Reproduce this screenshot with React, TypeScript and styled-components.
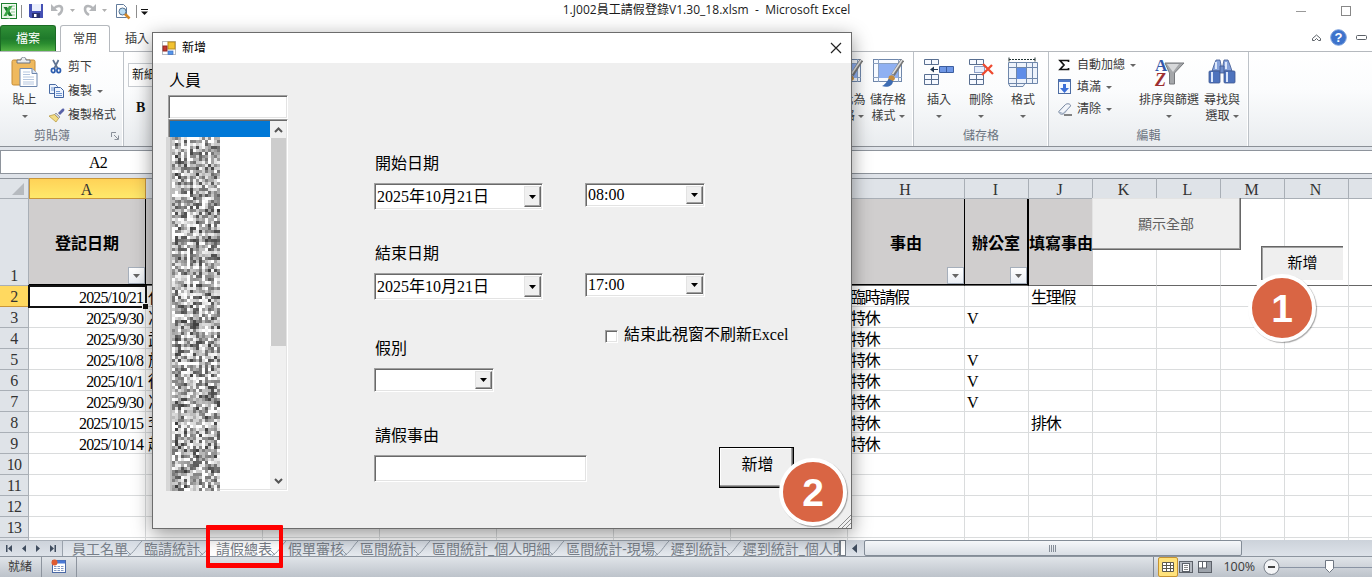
import React from "react";
import styled, { createGlobalStyle, css } from "styled-components";

const ui = `"Open Sans", "Noto Sans CJK TC", sans-serif`;
const ming = `"Liberation Serif", "Noto Sans CJK TC", serif`;

const GlobalStyle = createGlobalStyle`
  * { box-sizing: border-box; }
  body { margin: 0; overflow: hidden; background: #fff; }
`;

const Window = styled.div`
  position: relative;
  width: 1372px;
  height: 577px;
  overflow: hidden;
  display: flex;
  flex-direction: column;
  background: #fff;
  font: 12px/16px ${ui};
  color: #3b3b3b;
  white-space: nowrap;
`;

/* ---------- title bar and ribbon tabs ---------- */

const TitleBar = styled.header`
  display: grid;
  grid-template-columns: 560px 293px 1fr;
  height: 25px;
  flex: none;
`;
const QuickAccess = styled.div`
  display: flex;
  align-items: flex-start;
`;
const Caption = styled.div`
  text-align: center;
  line-height: 19px;
  color: #1a1a1a;
  white-space: pre;
  letter-spacing: 0.04px;
`;
const WindowButtons = styled.div`
  display: flex;
  justify-content: flex-end;
  gap: 35px;
  padding: 6px 21px 0 0;
`;
const TabStrip = styled.nav`
  display: flex;
  align-items: stretch;
  height: 27px;
  flex: none;
  border-bottom: 1px solid #b5b9be;
`;
const FileTab = styled.div`
  width: 56px;
  height: 26px;
  border: 1px solid #1c6b25;
  border-bottom: 0;
  border-radius: 3px 3px 0 0;
  background: linear-gradient(#2f8f36, #1f7a2b 50%, #2a8c2f 70%, #53b245);
  color: #fff;
  text-align: center;
  line-height: 25px;
`;
const ActiveTab = styled.div`
  width: 50px;
  height: 27px;
  margin: 0 15px 0 4px;
  border: 1px solid #b5b9be;
  border-bottom: 0;
  border-radius: 3px 3px 0 0;
  background: #fff;
  text-align: center;
  line-height: 25px;
  z-index: 1;
`;
const Tab = styled.div`
  line-height: 28px;
  margin-right: 31px;
`;
const TabTools = styled.div`
  margin-left: auto;
  display: flex;
  align-items: center;
  gap: 9px;
  padding: 0 5px 1px 0;
`;

/* ---------- ribbon ---------- */

const Ribbon = styled.section`
  display: flex;
  height: 95px;
  flex: none;
  background: linear-gradient(#fff, #fbfcfd 40%, #e9ecef);
  border-bottom: 1px solid #8b9097;
`;
const Group = styled.div<{ $w: number }>`
  width: ${(p) => p.$w}px;
  flex: none;
  display: flex;
  flex-direction: column;
  border-right: 1px solid #bdc2c8;
  box-shadow: inset -1px 0 #fff;
`;
const GroupBody = styled.div<{ $left?: number }>`
  display: flex;
  height: 76px;
  padding-left: ${(p) => p.$left ?? 0}px;
`;
const GroupLabel = styled.div<{ $right?: number }>`
  position: relative;
  text-align: center;
  color: #6b7380;
  line-height: 16px;
  padding-right: ${(p) => p.$right ?? 0}px;
`;
const Launcher = styled.svg`
  position: absolute;
  right: 4px;
  top: 4px;
`;
const BigButton = styled.div<{ $w: number }>`
  width: ${(p) => p.$w}px;
  flex: none;
  display: flex;
  flex-direction: column;
  align-items: center;
  text-align: center;
  padding-top: 5px;
  line-height: 16px;
`;
const IconBox = styled.div`
  height: 35px;
  display: flex;
`;
const LabelLine = styled.div`
  display: flex;
  align-items: center;
  height: 16px;
  gap: 3px;
`;
const Commands = styled.div<{ $row: number; $top: number; $left?: number }>`
  display: grid;
  grid-auto-rows: ${(p) => p.$row}px;
  padding: ${(p) => p.$top}px 0 0 ${(p) => p.$left ?? 0}px;
`;
const Command = styled.div<{ $gap: number }>`
  display: grid;
  grid-template-columns: ${(p) => p.$gap}px auto auto;
  justify-content: start;
  align-items: center;
`;
const Drop = styled.i`
  display: inline-block;
  border: 3px solid transparent;
  border-top-color: #666;
  border-bottom: 0;
  width: 6px;
  height: 3px;
`;
const CmdDrop = styled(Drop)`
  margin-left: 5px;
`;
const FontBox = styled.div`
  width: 200px;
  height: 24px;
  margin: 11px 0 0 4px;
  padding-left: 3px;
  border: 1px solid #c8ccd1;
  background: #fff;
  color: #111;
  line-height: 21px;
`;
const Bold = styled.div`
  font: bold 14px/18px "Liberation Serif", serif;
  color: #111;
  padding: 12px 0 0 12px;
`;

/* ---------- formula bar and sheet ---------- */

const FormulaBar = styled.div`
  flex: none;
  height: 31px;
  padding: 3px 0 4px;
  background: #dfe3e9;
`;
const FormulaInner = styled.div`
  height: 24px;
  border: 1px solid #8e949c;
  border-right: 0;
  background: #fff;
  padding-left: 88px;
  font: 16px/24px ${ming};
  color: #000;
  letter-spacing: -0.7px;
`;
const Sheet = styled.main`
  flex: none;
  height: 362px;
  overflow: hidden;
  display: grid;
  grid-template-columns: 29px repeat(8, 117px) repeat(6, 64px) 24px;
  grid-template-rows: 21px 87px;
  grid-auto-rows: 21px;
  font: 16px/21px ${ming};
  color: #000;
`;
const headBorder = css`
  border-right: 1px solid #a9afb6;
  border-bottom: 1px solid #a9afb6;
`;
const ColHead = styled.div<{ $on?: boolean }>`
  ${headBorder}
  border-top: 1px solid #8e949c;
  background: #dfe3e8;
  color: #333;
  text-align: center;
  line-height: 22px;
  padding-right: 2px;
  ${(p) =>
    p.$on &&
    css`
      background: linear-gradient(#ffd257, #ffe96b);
      border-color: #c9963a;
      border-left: 1px solid #c9963a;
    `}
`;
const Corner = styled(ColHead)`
  display: flex;
  justify-content: flex-end;
  align-items: flex-end;
  padding: 0 4px 3px 0;
`;
const RowHead = styled.div<{ $on?: boolean }>`
  ${headBorder}
  background: ${(p) => (p.$on ? "#ffd960" : "#dfe3e8")};
  ${(p) => p.$on && "border-color: #c9963a;"}
  display: flex;
  align-items: flex-end;
  justify-content: center;
  color: #333;
  line-height: 18px;
  letter-spacing: -0.7px;
`;
const Cell = styled.div<{ $right?: boolean }>`
  border-right: 1px solid #dadcdd;
  border-bottom: 1px solid #dadcdd;
  padding: 0 2px;
  overflow: hidden;
  line-height: 24px;
  letter-spacing: ${(p) => (p.$right ? "-0.9px" : "-1.3px")};
  text-align: ${(p) => (p.$right ? "right" : "left")};
`;
const ActiveCell = styled(Cell)`
  position: relative;
  overflow: visible;
  outline: 2px solid #111;
  outline-offset: -1px;
  border-color: #fff;
  z-index: 1;
  &::after {
    content: "";
    position: absolute;
    right: -3px;
    bottom: -3px;
    width: 5px;
    height: 5px;
    background: #111;
    border-left: 1px solid #fff;
    border-top: 1px solid #fff;
  }
`;
const HeadCell = styled.div<{ $edge?: number; $plain?: boolean }>`
  position: relative;
  background: ${(p) => (p.$plain ? "#fff" : "#d0cece")};
  border-right: ${(p) => (p.$plain ? "1px solid #dadcdd" : `${p.$edge ?? 1}px solid ${p.$edge === 0 ? "#d0cece" : "#000"}`)};
  border-bottom: 1px solid #666;
  box-shadow: ${(p) => (p.$plain || p.$edge === 0 ? "none" : "inset 0 -1px #000")};
  display: flex;
  align-items: center;
  justify-content: center;
  font-weight: 700;
  padding-top: 2px;
`;
const Filter = styled.span`
  position: absolute;
  right: 0;
  bottom: 1px;
  width: 17px;
  height: 17px;
  border: 1px solid #a6afbb;
  background: linear-gradient(#fff, #eaeef4);
  display: flex;
  align-items: center;
  justify-content: center;
`;
const SheetButton = styled.div<{ $x: number; $y: number; $w: number; $h: number; $sunk?: boolean }>`
  position: absolute;
  left: ${(p) => p.$x}px;
  top: ${(p) => p.$y}px;
  width: ${(p) => p.$w}px;
  height: ${(p) => p.$h}px;
  display: flex;
  align-items: center;
  justify-content: center;
  background: #efefef;
  ${(p) =>
    p.$sunk
      ? css`
          border-left: 1px solid #666;
          border-top: 1px solid #666;
          box-shadow: inset 1px 1px #a0a0a0;
          color: #000;
          font-size: 15px;
          padding-bottom: 3px;
        `
      : css`
          border-right: 1px solid #666;
          border-bottom: 1px solid #666;
          box-shadow: inset -1px -1px #a0a0a0, inset 1px 1px #e3e3e3;
          color: #606060;
          font-size: 14px;
        `}
`;

/* ---------- sheet tabs and status bar ---------- */

const BottomBar = styled.div`
  flex: none;
  height: 17px;
  display: flex;
  background: linear-gradient(#ccd2da, #dde2e9);
  border-bottom: 1px solid #8d959f;
`;
const Nav = styled.div`
  width: 63px;
  border-right: 1px solid #9aa2ac;
  border-top: 1px solid #a9b0b9;
`;
const Tabs = styled.div`
  width: 776px;
  display: flex;
  overflow: hidden;
  border-top: 1px solid #9aa2ac;
  padding-left: 1px;
  background: linear-gradient(#d4dae2, #e6eaef);
`;
const SheetTab = styled.div<{ $on?: boolean }>`
  display: flex;
  flex: none;
  padding-left: 8px;
  font: 14px/15px ${ui};
  color: #777e88;
  background: ${(p) => (p.$on ? "#fff" : "transparent")};
  & > svg { margin-left: -1px; }
`;
const TabSplit = styled.div`
  width: 7px;
  height: 16px;
  border: 1px solid #777f89;
  border-left-width: 2px;
  background: #fff;
`;
const ScrollTrack = styled.div`
  flex: 1;
  display: flex;
  align-items: center;
  padding-left: 6px;
  gap: 7px;
`;
const ScrollThumb = styled.div`
  width: 378px;
  height: 16px;
  border: 1px solid #838c97;
  border-radius: 2px;
  background: linear-gradient(#f5f7fa, #d9dee5);
  display: flex;
  align-items: center;
  justify-content: center;
`;
const StatusBar = styled.footer`
  flex: 1;
  display: flex;
  align-items: center;
  background: linear-gradient(#e0e4e9, #bdc3cb);
`;
const Ready = styled.div`
  width: 42px;
  height: 20px;
  line-height: 20px;
  padding-left: 8px;
  border-right: 1px solid #8d949e;
`;
const Macro = styled.div`
  width: 35px;
  height: 20px;
  padding: 2px 0 0 9px;
  border-right: 1px solid #8d949e;
`;
const StatusTools = styled.div`
  margin-left: auto;
  width: 219px;
  height: 20px;
  display: flex;
  align-items: center;
  border-left: 1px solid #7f8792;
  padding-left: 4px;
`;
const ViewOn = styled.div`
  width: 20px;
  height: 20px;
  border: 1px solid #c69331;
  border-radius: 2px;
  background: #ffe27b;
  padding: 3px 0 0 2px;
  margin-right: 1px;
`;
const Percent = styled.div`
  flex: none;
  width: 51px;
  padding-left: 11px;
  font-size: 12.5px;
`;

/* ---------- dialog ---------- */

const Dialog = styled.section`
  position: absolute;
  left: 152px;
  top: 32px;
  width: 700px;
  height: 497px;
  border: 1px solid #6c6c6c;
  background: #efefef;
  box-shadow: 0 5px 18px rgba(0, 0, 0, 0.42);
  display: flex;
  flex-direction: column;
  font: 16px/20px ${ming};
  color: #000;
  z-index: 3;
`;
const DialogTitle = styled.div`
  height: 30px;
  flex: none;
  background: #fff;
  display: flex;
  align-items: center;
  gap: 6px;
  padding: 0 9px;
  font: 12px/28px ${ui};
  & > svg:last-child { margin-left: auto; }
`;
const DialogBody = styled.div`
  flex: 1;
  display: flex;
  padding: 7px 0 0 15px;
`;
const People = styled.div`
  width: 120px;
  margin-right: 86px;
`;
const Label = styled.div<{ $top?: number }>`
  margin-top: ${(p) => p.$top ?? 0}px;
  height: 20px;
  line-height: 22px;
  padding-left: 1px;
`;
const Sunken = styled.div<{ $w: number; $h: number }>`
  width: ${(p) => p.$w}px;
  height: ${(p) => p.$h}px;
  background: #fff;
  border: 1px solid;
  border-color: #a0a0a0 #fff #fff #a0a0a0;
  box-shadow: inset 1px 1px #696969, inset -1px -1px #e3e3e3;
  padding: 2px 1px 2px 2px;
  display: flex;
`;
const NameInput = styled(Sunken)<{ $top?: number }>`
  margin-top: ${(p) => p.$top ?? 5}px;
`;
const NameList = styled(Sunken)`
  position: relative;
  padding: 1px;
`;
const Selected = styled.div`
  flex: 1;
  height: 16px;
  background: #0078d7;
`;
const ListScroll = styled.div`
  width: 16px;
  display: flex;
  flex-direction: column;
  align-items: center;
  background: #f0f0f0;
`;
const ListThumb = styled.div`
  width: 16px;
  border-left: 1px solid #fff;
  height: 208px;
  background: #cdcdcd;
  margin-bottom: auto;
`;
const Redacted = styled.svg`
  position: absolute;
  left: -3px;
  top: 17px;
`;
const Fields = styled.div`
  width: 420px;
`;
const Pair = styled.div<{ $top: number }>`
  display: flex;
  gap: 42px;
  margin-top: ${(p) => p.$top}px;
  height: 27px;
`;
const Value = styled.span<{ $h: number }>`
  flex: 1;
  line-height: ${(p) => p.$h}px;
`;
const Arrow = styled.span`
  width: 17px;
  align-self: stretch;
  background: #f0f0f0;
  border: 1px solid;
  border-color: #e3e3e3 #696969 #696969 #e3e3e3;
  box-shadow: inset -1px -1px #a0a0a0;
  display: flex;
  align-items: center;
  justify-content: center;
`;
const CheckRow = styled.div`
  display: flex;
  align-items: center;
  height: 20px;
  gap: 6px;
  margin: 25px 0 0 231px;
`;
const CheckBox = styled(Sunken)`
  margin-top: 3px;
`;
const LastRow = styled.div`
  display: flex;
  align-items: flex-start;
  margin-top: 2px;
`;
const Reason = styled.div`
  width: 345px;
`;
const Submit = styled.button`
  width: 75px;
  height: 41px;
  padding: 0 0 5px 2px;
  border: 1px solid #000;
  background: #efefef;
  box-shadow: inset -1px -1px #696969, inset -2px -2px #a0a0a0, inset 1px 1px #fff;
  font: inherit;
  color: inherit;
`;
const Grip = styled.svg`
  position: absolute;
  right: 0;
  bottom: 0;
`;
const Step = styled.div<{ $x: number; $y: number }>`
  position: absolute;
  left: ${(p) => p.$x - 34}px;
  top: ${(p) => p.$y - 34}px;
  width: 68px;
  height: 68px;
  border: 4px solid #fff;
  border-radius: 50%;
  background: #d96544;
  box-shadow: 1px 1px 1px rgba(0, 0, 0, 0.35);
  color: #fff;
  font: bold 39px/62px "Liberation Sans", sans-serif;
  text-align: center;
  z-index: 5;
`;
const Highlight = styled.div`
  position: absolute;
  left: 206px;
  top: 525px;
  width: 77px;
  height: 43px;
  border: 4px solid #f00;
  border-width: 5px 4px;
  border-radius: 1px;
  z-index: 4;
`;

/* ---------- drawings ---------- */

const ExcelLogo = () => (
  <svg width="17" height="17" viewBox="0 0 17 17">
    <rect x="1.500" y=".5" width="15" height="15" fill="#f4faf3" stroke="#1d7f2e" />
    <path d="M11 3h4M11 6h4M11 9h4M11 12h4" stroke="#8fc795" />
    <path d="M2 2.500l8-1v14l-8-1z" fill="#e3f3e1" />
    <path d="M3.500 4h3.500l5.500 9H9z" fill="#1b7a2c" />
    <path d="M12.500 3H9L3.500 13h3z" fill="#3aa544" />
  </svg>
);
const Save = () => (
  <svg width="14" height="14">
    <path d="M0 0h14v14H1.500L0 12.500z" fill="#4450b4" />
    <rect x="3" y="0" width="9" height="7" fill="#e9eefb" />
    <rect x="3" y="9" width="8" height="5" fill="#27306f" />
    <rect x="5" y="10" width="2.500" height="3" fill="#fff" />
  </svg>
);
const Undo = ({ flip }: { flip?: boolean }) => (
  <svg width="13" height="14" viewBox="0 0 13 14">
    <g transform={flip ? "translate(13 0) scale(-1 1)" : undefined}>
      <path d="M3 5.500C6 2 11 2 11 6c0 3-1.500 4.500-4 6" fill="none" stroke="#b4b6b9" strokeWidth="2.600" />
      <path d="M0 1v7h7z" fill="#b4b6b9" />
    </g>
  </svg>
);
const Preview = () => (
  <svg width="16" height="16">
    <path d="M1.500.5h7l3 3v10h-10z" fill="#fff" stroke="#637c9c" />
    <circle cx="7.500" cy="7.500" r="3.500" fill="#b9dcf3" stroke="#56718f" />
    <path d="M10 10l4.500 4.500" stroke="#d48726" strokeWidth="2.600" />
  </svg>
);
const Paste = () => (
  <svg width="28" height="32">
    <rect x="1" y="3" width="23" height="25" rx="1.500" fill="#efb95e" stroke="#c68c35" />
    <path d="M6 6V3h4c0-4 5-4 5 0h4v3z" fill="#e9ebee" stroke="#6c7480" />
    <path d="M9 11.500h12l5 5v13H9z" fill="#fff" stroke="#6d86ad" />
    <path d="M21 11.500v5h5" fill="#dce6f5" stroke="#6d86ad" />
    <path d="M12 15h7M12 17.500h7M12 20h11M12 22.500h11M12 25h11M12 27h11" stroke="#b5c6df" />
  </svg>
);
const Scissors = () => (
  <svg width="14" height="16" fill="none">
    <path d="M4 1l5 9M9.500 1L5 10" stroke="#5e7392" strokeWidth="1.700" />
    <ellipse cx="4.200" cy="11.500" rx="1.800" ry="2.200" stroke="#2b5cae" strokeWidth="1.700" />
    <ellipse cx="9.700" cy="11.500" rx="1.800" ry="2.200" stroke="#2b5cae" strokeWidth="1.700" />
  </svg>
);
const Copy = () => (
  <svg width="16" height="14">
    <path d="M.5.5h6l2 2v7h-8z" fill="#eef4fd" stroke="#4a6ca5" />
    <path d="M2 4h4M2 6h5" stroke="#6d93cf" />
    <path d="M5.500 3.500h6l3 3v7h-9z" fill="#eef4fd" stroke="#3f62a0" />
    <path d="M7 7.500h4M7 9.500h6M7 11.500h6" stroke="#6d93cf" />
  </svg>
);
const Brush = () => (
  <svg width="16" height="15">
    <path d="M9 5l4-4c2-1 3 0 2 2l-4 4z" fill="#5963a8" />
    <path d="M7 5l4 4-1.500 1.500-4-4z" fill="#c9cdd5" stroke="#777" strokeWidth=".6" />
    <path d="M5.500 6.500l4 4L7 14 0 8z" fill="#f2dc86" stroke="#b39437" strokeWidth=".7" />
  </svg>
);
const CellStyle = () => (
  <svg width="31" height="31">
    <rect x=".5" y="2.500" width="28" height="22" fill="#f7faff" stroke="#6f87ab" />
    <path d="M5.500 2v23M25.500 2v23M0 6.500h29M0 20.500h29" stroke="#8aa0c0" />
    <rect x="6" y="7" width="19" height="14" fill="#8fb0f2" />
    <path d="M29.500 3L20 18" stroke="#777" strokeWidth="4" />
    <path d="M29 3L19.500 17" stroke="#ddd" strokeWidth="1.500" />
    <path d="M16 19c3-2 6 0 6 3l-3 3-4-2z" fill="#c58d3f" />
    <path d="M16 22c-2 2-4 6-7 7 5 2 11 0 11-5z" fill="#3d6cb3" />
  </svg>
);
const InsertCells = () => (
  <svg width="30" height="29" stroke="#596f91">
    <g fill="#f6f9ff">
      <path d="M.5 2.500h14v5H.5zM7.500 2.500v5M.5 17.500h14v10H.5zM7.500 17.500v10M.5 22.500h14" />
      <path d="M15.500 9.500h14v6h-14zM22.500 9.500v6" fill="#6f97e6" stroke="#3c5e9f" />
    </g>
    <path d="M14 12.500H8" stroke="#243954" />
    <path d="M6 12.500l4-3v6z" fill="#243954" stroke="none" />
  </svg>
);
const DeleteCells = () => (
  <svg width="25" height="29" stroke="#596f91">
    <path d="M.5 2.500h14v5H.5zM7.500 2.500v5M.5 17.500h14v10H.5zM7.500 17.500v10M.5 22.500h14" fill="#f6f9ff" />
    <path d="M5.500 9.500h10v6h-10z" fill="#e6eefc" stroke="#24468f" strokeDasharray="1 1" />
    <path d="M14 7l10 10M23 8L13 18" stroke="#ee4a30" strokeWidth="2.300" />
  </svg>
);
const FormatCells = () => (
  <svg width="30" height="31" stroke="#6f87ab">
    <path d="M1 2.500h26" stroke="#233" strokeDasharray="2 1" />
    <path d="M1 .5v4M27 .5v4" stroke="#233" />
    <path d="M.5 5.500h29v21H17l-2 3H2l-1.500-3z" fill="#eef3fb" />
    <path d="M8.500 5v24M18.500 5v21M24.500 5v21M0 10.500h29M0 21.500h29M0 26.500h29" />
    <rect x="9" y="11" width="9" height="11" fill="#5f8de8" stroke="none" />
  </svg>
);
const FillIcon = () => (
  <svg width="13" height="16">
    <rect x=".5" y=".5" width="12" height="14" fill="#f4f8ff" stroke="#4d6ca2" />
    <path d="M1 2h11" stroke="#4d78c9" strokeWidth="2" />
    <path d="M5 5h3v4h3l-4.500 5L2 9h3z" fill="#3b6fd8" />
  </svg>
);
const Eraser = () => (
  <svg width="14" height="13">
    <path d="M.8 8.500L7.500 1.500c2-1.500 5.500-.5 5 1.500L6 10.500c-2 1.500-5 .5-5.200-2z" fill="#f2f5fa" stroke="#74849e" />
    <path d="M1 9l4 1.500L12 4" fill="none" stroke="#9cabc2" />
    <path d="M6 12h8" stroke="#111" />
  </svg>
);
const SortIcon = () => (
  <svg width="31" height="32">
    <path d="M11 6h19l-9.500 10v11h-5V16z" fill="#a5a7aa" stroke="#77797d" />
    <path d="M13 7h12l-6 8z" fill="#d7d8da" />
    <text x="1" y="14" fontFamily="Liberation Serif" fontWeight="700" fontSize="17" fill="#3457a8">A</text>
    <text x="1" y="29" fontFamily="Liberation Serif" fontWeight="700" fontStyle="italic" fontSize="18" fill="#9c2f31">Z</text>
  </svg>
);
const Binoculars = () => (
  <svg width="28" height="28">
    <g stroke="#3d5790" strokeWidth=".8">
      <path d="M8 3h4l1 5v6H4l2-6zM16 3h4l2 5 2 6h-9V8z" fill="#86a2da" />
      <rect x="1" y="14" width="11" height="12" rx="1" fill="#4e73bd" />
      <rect x="16" y="14" width="11" height="12" rx="1" fill="#4e73bd" />
      <path d="M12 9h4v7h-4z" fill="#6d8bc9" />
    </g>
    <path d="M4 15v10M19 15v10M8 5v7M18 5v7" stroke="#dce7fb" strokeWidth="2" />
  </svg>
);
const FormIcon = () => (
  <svg width="14" height="14">
    <rect x=".5" y=".5" width="13" height="13" fill="#fff" stroke="#b8bcc2" />
    <rect x="6" y="1" width="7" height="7" fill="#f2c230" stroke="#b98a1b" />
    <rect x="1" y="5" width="4" height="5" fill="#c5362e" stroke="#8f2822" />
    <rect x="6" y="10" width="5" height="3.500" fill="#5595ea" stroke="#3f70bf" strokeWidth=".7" />
  </svg>
);
const Tri = ({ w = 7, c = "#000" }: { w?: number; c?: string }) => (
  <svg width={w} height="4" viewBox="0 0 7 4">
    <path d="M0 0h7L3.500 4z" fill={c} />
  </svg>
);
const Chevron = ({ down }: { down?: boolean }) => (
  <svg width="9" height="17" viewBox="0 0 9 17">
    <path d={down ? "M1 7l3.500 3.500L8 7" : "M1 11l3.500-3.500L8 11"} fill="none" stroke="#555" strokeWidth="2" />
  </svg>
);

/* Pixelated names: three glyph-wide blocks per 16px line */
const CELL = 3;
const mosaic = (() => {
  const out: { x: number; y: number; f: string }[] = [];
  let seed = 20251;
  const rnd = () => {
    seed = (seed * 1103515245 + 12345) % 2147483648;
    return seed / 2147483648;
  };
  for (let r = 0; r < 118; r++) {
    const lineGap = (r * CELL) % 16 < 2;
    for (let c = 0; c < 16; c++) {
      const gap = c === 0 || c === 5 || c === 10;
      let g = Math.round(60 + rnd() * 205);
      if (gap || lineGap) g += 50;
      g = Math.min(255, g);
      out.push({ x: 6 + c * CELL, y: r * CELL, f: `rgb(${g},${g},${g})` });
    }
  }
  return out;
})();

const letters = "ABCDEFGHIJKLMN".split("").concat("");
const rows = [
  ["2025/10/21", "代", "臨時請假", "", "生理假"],
  ["2025/9/30", "冷", "特休", "V", ""],
  ["2025/9/30", "武", "特休", "", ""],
  ["2025/10/8", "施", "特休", "V", ""],
  ["2025/10/1", "徐", "特休", "V", ""],
  ["2025/9/30", "冷", "特休", "V", ""],
  ["2025/10/15", "李", "特休", "", "排休"],
  ["2025/10/14", "趙", "特休", "", ""],
  [], [], [], [],
];
const headText: Record<string, string> = { A: "登記日期", H: "事由", I: "辦公室", J: "填寫事由" };
const sheetTabs = ["員工名單", "臨請統計", "請假總表", "假單審核", "區間統計", "區間統計_個人明細", "區間統計-現場", "遲到統計", "遲到統計_個人明細"];

const FilterArrow = () => (
  <Filter>
    <Tri c="#666" />
  </Filter>
);

const Combo = ({ w, h, text = "" }: { w: number; h: number; text?: string }) => (
  <Sunken $w={w} $h={h}>
    <Value $h={h - 6}>{text}</Value>
    <Arrow>
      <Tri />
    </Arrow>
  </Sunken>
);

const cellFor = (row: string[], col: string) => {
  const at = ["A", "B", "H", "I", "J"].indexOf(col);
  return at < 0 ? "" : row[at] ?? "";
};

export default function App() {
  return (
    <Window>
      <GlobalStyle />
      <TitleBar>
        <QuickAccess>
          <svg width="150" height="25">
            <g transform="translate(0 3)"><ExcelLogo /></g>
            <path d="M21.500 5v13M136.500 5v13" stroke="#8d8d8d" />
            <g transform="translate(29 4)"><Save /></g>
            <g transform="translate(51 3)"><Undo /></g>
            <path d="M70 9h5l-2.500 3zM102 9h5l-2.500 3z" fill="#b0b0b0" />
            <g transform="translate(83 3)"><Undo flip /></g>
            <g transform="translate(115 4)"><Preview /></g>
            <path d="M141 9.500h7" stroke="#111" />
            <path d="M141 11.500h7l-3.500 3.500z" fill="#111" />
          </svg>
        </QuickAccess>
        <Caption>{"1.J002員工請假登錄V1.30_18.xlsm  -  Microsoft Excel"}</Caption>
        <WindowButtons>
          <svg width="10" height="10"><path d="M0 5.500h10" stroke="#999" /></svg>
          <svg width="10" height="10"><rect x=".5" y=".5" width="9" height="9" fill="none" stroke="#888" /></svg>
        </WindowButtons>
      </TitleBar>
      <TabStrip>
        <FileTab>檔案</FileTab>
        <ActiveTab>常用</ActiveTab>
        {["插入", "版面配置", "公式", "資料", "校閱", "檢視", "增益集"].map((t) => (
          <Tab key={t}>{t}</Tab>
        ))}
        <TabTools>
          <svg width="9" height="8"><path d="M.5 4.500l4-3.500 4 3.500v2h-2l-2-2-2 2h-2z" fill="#fff" stroke="#5b6067" /></svg>
          <svg width="17" height="17">
            <circle cx="8.500" cy="8.500" r="7.800" fill="#3d73cc" stroke="#7ca1dc" />
            <text x="8.500" y="13" textAnchor="middle" fontFamily="Liberation Sans" fontWeight="700" fontSize="13" fill="#fff">?</text>
          </svg>
          <svg width="11" height="6"><rect x=".5" y=".5" width="10" height="4" rx="1" fill="#fff" stroke="#5b6067" /></svg>
        </TabTools>
      </TabStrip>

      <Ribbon>
        <Group $w={124}>
          <GroupBody $left={4}>
            <BigButton $w={41}>
              <IconBox><Paste /></IconBox>
              <LabelLine>貼上</LabelLine>
              <LabelLine><Drop /></LabelLine>
            </BigButton>
            <Commands $row={24} $top={3} $left={4}>
              <Command $gap={19}><Scissors />剪下</Command>
              <Command $gap={19}><Copy />複製<CmdDrop /></Command>
              <Command $gap={19}><Brush />複製格式</Command>
            </Commands>
          </GroupBody>
          <GroupLabel $right={19}>
            <span>剪貼簿</span>
            <Launcher width="8" height="8" fill="none" stroke="#8a9099">
              <path d="M.5 5V.5H5M3 3l4 4M7.500 3.500v4h-4" />
            </Launcher>
          </GroupLabel>
        </Group>
        <Group $w={702}>
          <FontBox>新細明體</FontBox>
          <Bold>B</Bold>
        </Group>
        <Group $w={88}>
          <GroupBody>
            <BigButton $w={43}>
              <IconBox><CellStyle /></IconBox>
              <LabelLine>式化為</LabelLine>
              <LabelLine>表格<Drop /></LabelLine>
            </BigButton>
            <BigButton $w={38}>
              <IconBox><CellStyle /></IconBox>
              <LabelLine>儲存格</LabelLine>
              <LabelLine>樣式<Drop /></LabelLine>
            </BigButton>
          </GroupBody>
        </Group>
        <Group $w={135}>
          <GroupBody $left={4}>
            <BigButton $w={42}>
              <IconBox><InsertCells /></IconBox>
              <LabelLine>插入</LabelLine>
              <LabelLine><Drop /></LabelLine>
            </BigButton>
            <BigButton $w={42}>
              <IconBox><DeleteCells /></IconBox>
              <LabelLine>刪除</LabelLine>
              <LabelLine><Drop /></LabelLine>
            </BigButton>
            <BigButton $w={42}>
              <IconBox><FormatCells /></IconBox>
              <LabelLine>格式</LabelLine>
              <LabelLine><Drop /></LabelLine>
            </BigButton>
          </GroupBody>
          <GroupLabel>儲存格</GroupLabel>
        </Group>
        <Group $w={200}>
          <GroupBody $left={9}>
            <Commands $row={22} $top={2}>
              <Command $gap={19}>
                <svg width="12" height="12"><path d="M10.500 3V1.500H2L6 6l-4 4.500h8.500V9" fill="none" stroke="#111" strokeWidth="1.700" /></svg>
                自動加總<CmdDrop />
              </Command>
              <Command $gap={19}><FillIcon />填滿<CmdDrop /></Command>
              <Command $gap={19}><Eraser />清除<CmdDrop /></Command>
            </Commands>
            <BigButton $w={66}>
              <IconBox><SortIcon /></IconBox>
              <LabelLine>排序與篩選</LabelLine>
              <LabelLine><Drop /></LabelLine>
            </BigButton>
            <BigButton $w={40}>
              <IconBox><Binoculars /></IconBox>
              <LabelLine>尋找與</LabelLine>
              <LabelLine>選取<Drop /></LabelLine>
            </BigButton>
          </GroupBody>
          <GroupLabel>編輯</GroupLabel>
        </Group>
      </Ribbon>

      <FormulaBar>
        <FormulaInner>A2</FormulaInner>
      </FormulaBar>

      <Sheet>
        <Corner>
          <svg width="12" height="12"><path d="M12 0v12H0z" fill="#b6babf" /></svg>
        </Corner>
        {letters.map((l) => (
          <ColHead key={l} $on={l === "A"}>{l}</ColHead>
        ))}
        <RowHead>1</RowHead>
        {letters.map((l) => (
          <HeadCell key={l} $plain={!l || l > "J"} $edge={l === "J" ? 0 : l === "I" ? 2 : 1}>
            {headText[l]}
            {l && l < "J" && <FilterArrow />}
          </HeadCell>
        ))}
        {rows.map((row, i) => (
          <React.Fragment key={i}>
            <RowHead $on={i === 0}>{i + 2}</RowHead>
            {letters.map((l) =>
              i === 0 && l === "A" ? (
                <ActiveCell key={l} $right>{row[0]}</ActiveCell>
              ) : (
                <Cell key={l} $right={l === "A"}>{cellFor(row, l)}</Cell>
              )
            )}
          </React.Fragment>
        ))}
        <RowHead />
        {letters.map((l) => (
          <Cell key={l} />
        ))}
      </Sheet>

      <BottomBar>
        <Nav>
          <svg width="62" height="15" fill="#3f4c5e">
            <path d="M6 4h1.500v7H6zM12 4v7L8 7.500zM26 4v7l-4-3.500zM36 4v7l4-3.500zM50 4v7l4-3.500zM54.500 4H56v7h-1.500z" />
          </svg>
        </Nav>
        <Tabs>
          {sheetTabs.map((t, i) => (
            <SheetTab key={t} $on={i === 2}>
              {t}
              <svg width="9" height="15" overflow="visible">
                <path d="M1 14.500C6 13 10 5 15 0M-1 9l5 5" fill="none" stroke="#929ba6" />
              </svg>
            </SheetTab>
          ))}
        </Tabs>
        <TabSplit />
        <ScrollTrack>
          <svg width="5" height="9"><path d="M5 0v9L0 4.500z" fill="#3f4c5e" /></svg>
          <ScrollThumb>
            <svg width="8" height="7"><path d="M.5 0v7M2.500 0v7M4.500 0v7M6.500 0v7" stroke="#858d98" /></svg>
          </ScrollThumb>
        </ScrollTrack>
      </BottomBar>

      <StatusBar>
        <Ready>就緒</Ready>
        <Macro>
          <svg width="16" height="15">
            <rect x="1.500" y="1.500" width="13" height="12" fill="#fff" stroke="#4b69a5" />
            <path d="M2 3h12" stroke="#4b7ad6" strokeWidth="3" />
            <path d="M3 7.500h10M3 9.500h10M3 11.500h10" stroke="#8298c4" strokeDasharray="2.500 1" />
            <circle cx="3.500" cy="3.500" r="3" fill="#df5a30" />
          </svg>
        </Macro>
        <StatusTools>
          <ViewOn>
            <svg width="14" height="12" stroke="#5e5a4c" fill="#fff">
              <path d="M1.500 1.500h11v9h-11zM1.500 4.500h11M1.500 7.500h11M5.500 1.500v9M9.500 1.500v9" />
            </svg>
          </ViewOn>
          <svg width="34" height="13" fill="none" stroke="#5c6169">
            <rect x=".5" y=".5" width="13" height="11" fill="#b5bac1" />
            <rect x="3.500" y="2.500" width="7" height="8" fill="#fff" />
            <path d="M5 4.500h4M5 6.500h4M5 8.500h4" stroke="#888" />
            <rect x="19.500" y=".5" width="13" height="11" fill="#9da3ab" />
            <path d="M20 1h8v6h-8z" fill="#fff" stroke="none" />
            <path d="M23.500 1v6M27.500 1v6h-8" />
          </svg>
          <Percent>100%</Percent>
          <svg width="110" height="20">
            <path d="M16 10.500h94" stroke="#8993a3" />
            <circle cx="8.500" cy="10" r="7.500" fill="#f4f5f7" stroke="#777e88" />
            <path d="M5 10h7" stroke="#444" strokeWidth="2" />
            <path d="M62.500 3.500h8v8l-4 4-4-4z" fill="#fff" stroke="#6f7782" />
          </svg>
        </StatusTools>
      </StatusBar>

      <SheetButton $x={1092} $y={198} $w={149} $h={52}>顯示全部</SheetButton>
      <SheetButton $x={1261} $y={246} $w={82} $h={34} $sunk>新增</SheetButton>

      <Dialog>
        <DialogTitle>
          <FormIcon />
          <span>新增</span>
          <svg width="12" height="12"><path d="M1 1l10 10M11 1L1 11" stroke="#222" strokeWidth="1.200" /></svg>
        </DialogTitle>
        <DialogBody>
          <People>
            <Label>人員</Label>
            <NameInput $w={120} $h={24} />
            <NameList $w={120} $h={372}>
              <Selected />
              <ListScroll>
                <Chevron />
                <ListThumb />
                <Chevron down />
              </ListScroll>
              <Redacted width="54" height="354" shapeRendering="crispEdges">
                <rect width="54" height="354" fill="#bdbdbd" />
                <rect width="4" height="354" fill="#d6d6d6" />
                {mosaic.map((m, i) => (
                  <rect key={i} x={m.x} y={m.y} width={CELL} height={CELL} fill={m.f} />
                ))}
              </Redacted>
            </NameList>
          </People>
          <Fields>
            <Label $top={83}>開始日期</Label>
            <Pair $top={10}>
              <Combo w={169} h={27} text="2025年10月21日" />
              <Combo w={120} h={24} text="08:00" />
            </Pair>
            <Label $top={33}>結束日期</Label>
            <Pair $top={10}>
              <Combo w={169} h={27} text="2025年10月21日" />
              <Combo w={120} h={24} text="17:00" />
            </Pair>
            <CheckRow>
              <CheckBox $w={13} $h={13} />
              結束此視窗不刷新Excel
            </CheckRow>
            <Label $top={-7}>假別</Label>
            <Pair $top={10}>
              <Combo w={120} h={24} />
            </Pair>
            <Label $top={30}>請假事由</Label>
            <LastRow>
              <Reason>
                <NameInput $w={213} $h={27} $top={8} />
              </Reason>
              <Submit>新增</Submit>
            </LastRow>
          </Fields>
        </DialogBody>
        <Grip width="13" height="14" stroke="#8b8b8b">
          <path d="M0 14L13 1M4 14l9-9M8 14l5-5" />
        </Grip>
      </Dialog>

      <Highlight />
      <Step $x={1282} $y={308}>1</Step>
      <Step $x={813} $y={492}>2</Step>
    </Window>
  );
}
